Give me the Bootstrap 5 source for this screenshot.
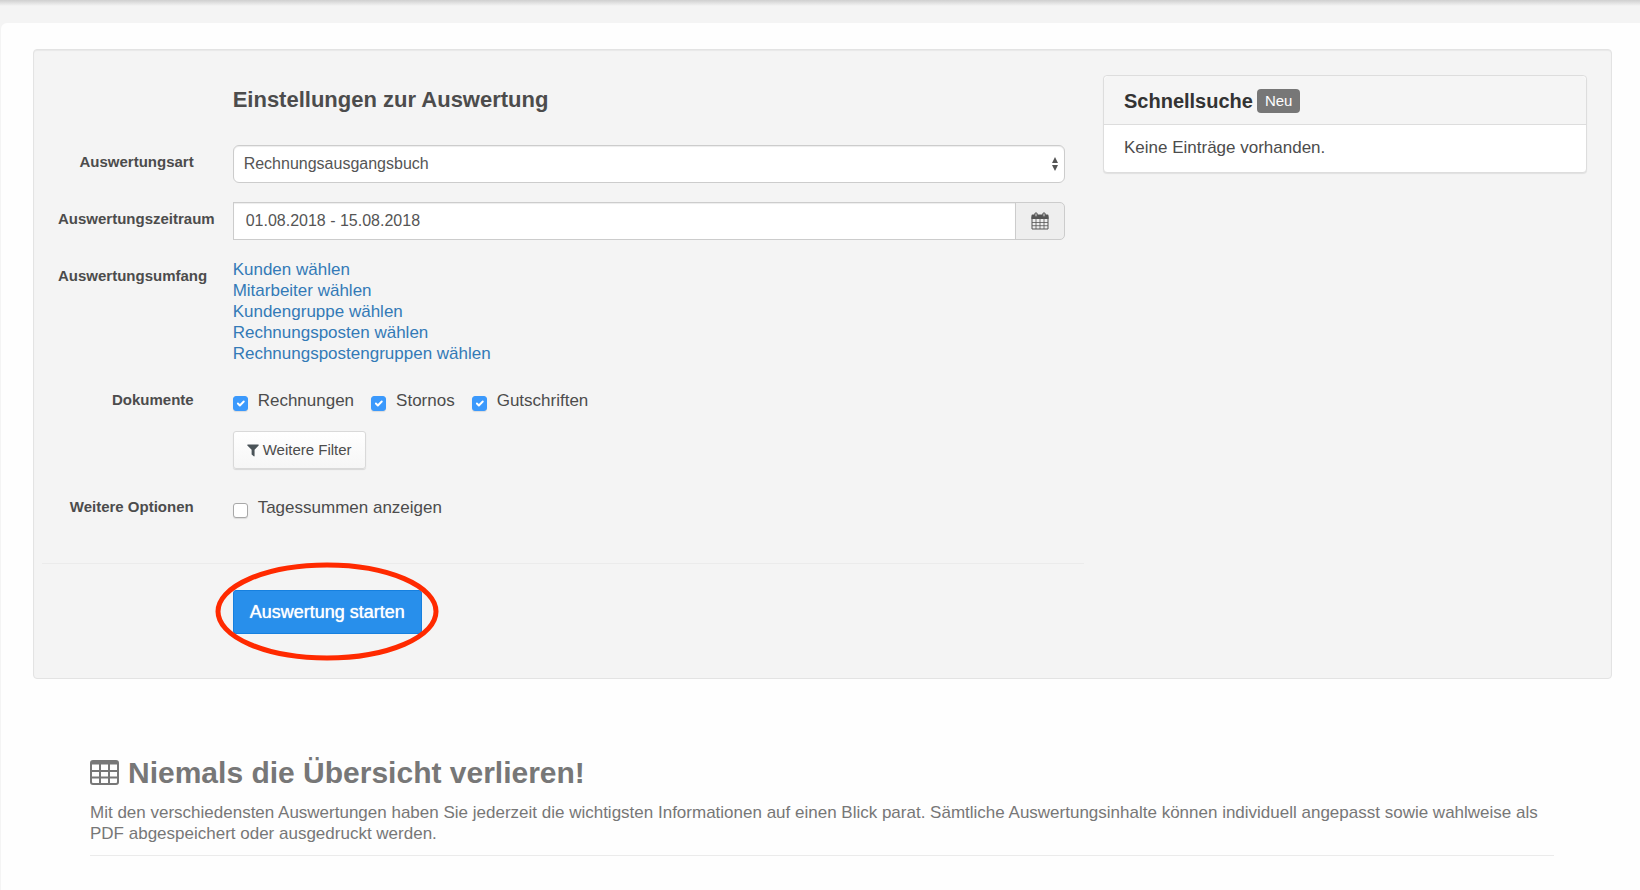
<!DOCTYPE html>
<html lang="de">
<head>
<meta charset="utf-8">
<meta name="viewport" content="width=device-width, initial-scale=1">
<title>Auswertung</title>
<link href="https://cdn.jsdelivr.net/npm/bootstrap@5.3.0/dist/css/bootstrap.min.css" rel="stylesheet">
<style>
body { background: #f4f4f4; color: #4c4c4c; font-family: "Liberation Sans", Arial, sans-serif; font-size: 17px; line-height: 21px; }
.topbar-edge { height: 23px; background: linear-gradient(#cfcfcf, #f4f4f4 6px); }
.sheet { background: #fefefe; border-radius: 6px 0 0 0; margin-left: 1px; padding: 26px 28px 0 32px; min-height: calc(100vh - 23px); }
.well { background: #f4f4f4; border: 1px solid #e3e3e3; border-radius: 4px; box-shadow: inset 0 1px 1px rgba(0,0,0,.05); padding: 25px 24px 44px 25px; }
.outer-row { --bs-gutter-x: 38px; }
.form-line { --bs-gutter-x: 36px; margin-bottom: 19px; }
.form-line.filters { margin-bottom: 21px; }
.form-title { font-size: 22px; line-height: 50px; margin-bottom: 20px; font-weight: 700; }
.line-label { font-size: 15px; font-weight: 700; line-height: 20px; padding: 7px 21px 0 17px; white-space: nowrap; }
.line-label > * { margin: 0; font: inherit; }
.field { font-size: 16px; height: 38px; color: #555; border: 1px solid #ccc; border-radius: 5px; box-shadow: inset 0 1px 1px rgba(0,0,0,.075); }
select.field { padding: 0 30px 0 10px; border-radius: 6px; background: #fff url("data:image/svg+xml,%3Csvg xmlns='http://www.w3.org/2000/svg' viewBox='0 0 8 14'%3E%3Cpath fill='%23555' d='M4 0l3 6H1zM4 14l3-6H1z'/%3E%3C/svg%3E") no-repeat right 5px center / 8px 14px; }
input.field { padding: 0 12px; border-radius: 0; }
.cal-addon { width: 50px; padding: 0; justify-content: center; background: #eee; border-color: #ccc; color: #555; border-radius: 0 5px 5px 0; }
.pick { color: #337ab7; text-decoration: none; }
.options { padding-top: 7px; gap: 17px; }
.tick { display: flex; gap: 10px; }
.tick .form-check-input { width: 15px; height: 15px; margin: 6px 0 0; border: 1px solid #a8a8a8; border-radius: 3px; box-shadow: 0 1px 1px rgba(0,0,0,.1); }
.tick .form-check-input:checked { background-color: #3b99fc; border-color: #3b99fc; }
.btn-filter { margin-top: 20px; height: 38px; padding: 0 13px; font-size: 15px; color: #4c4c4c; background: linear-gradient(#fff, #f6f6f6); border: 1px solid #d9d9d9; border-radius: 3px; box-shadow: 0 1px 1px rgba(0,0,0,.12); }
.rule { margin: 0; border-top: 1px solid #ebebeb; opacity: 1; }
.form-rule { margin: 45px 1px 26px; }
.btn-start { height: 44px; padding: 0 16px; font-size: 18px; color: #fff; background: #288feb; border: 1px solid #1680df; border-radius: 3px; text-shadow: 0 0 1px #fff; }
.marker { left: -18px; top: -28px; width: 224px; height: 99px; pointer-events: none; }
.quick { border: 1px solid #ddd; border-radius: 4px; box-shadow: 0 1px 1px rgba(0,0,0,.08); }
.quick .card-header { background: #f5f5f5; border-color: #ddd; padding: 2px 20px 0; height: 49px; color: #333; gap: 4px; }
.quick h2 { font-size: 20px; font-weight: 700; margin: 0; }
.quick .card-body { padding: 12px 20px 14px; }
.tag-new { background: #777; color: #fff; font-size: 15px; line-height: 24px; padding: 0 8px; border-radius: 4px; }
.promo { padding: 74px 58px 0 57px; color: #777; }
.promo h1 { font-size: 30px; line-height: 40px; font-weight: 700; margin: 0 0 9px; gap: 9px; }
.promo h1 svg { margin-bottom: 2px; }
.promo p { margin: 0 0 11px; }
</style>
</head>
<body>
<div class="topbar-edge"></div>
<main class="sheet">
  <div class="well">
    <div class="row outer-row">
      <form class="col-8">
        <div class="row form-line mb-0">
          <h2 class="col-10 offset-2 form-title">Einstellungen zur Auswertung</h2>
        </div>
        <div class="row form-line">
          <div class="col-2 line-label text-end"><label for="kind">Auswertungsart</label></div>
          <div class="col-10">
            <select id="kind" class="form-select field"><option>Rechnungsausgangsbuch</option></select>
          </div>
        </div>
        <div class="row form-line">
          <div class="col-2 line-label"><label for="period">Auswertungszeitraum</label></div>
          <div class="col-10">
            <div class="input-group flex-nowrap">
              <input id="period" type="text" class="form-control field" value="01.08.2018 - 15.08.2018">
              <span class="input-group-text cal-addon">
                <svg width="18" height="18" viewBox="0 0 18 18" aria-hidden="true"><path fill="none" stroke="currentColor" d="M1 4.500h16v12.500H1z"/><path fill="none" stroke="currentColor" stroke-width=".8" d="M5 7v10M9 7v10M13 7v10M1 10.500h16M1 13.700h16"/><path fill="currentColor" d="M1.500 2.500h15a1 1 0 0 1 1 1V7H.5V3.500a1 1 0 0 1 1-1z"/><path fill="#bbb" stroke="currentColor" d="M3.800 1.500q1.200-1.500 2.400 0v3q-1.200 1-2.400 0zM11.800 1.500q1.200-1.500 2.400 0v3q-1.200 1-2.400 0z"/></svg>
              </span>
            </div>
          </div>
        </div>
        <div class="row form-line">
          <div class="col-2 line-label">Auswertungsumfang</div>
          <div class="col-10 d-flex flex-column align-items-start">
            <a class="pick" href="#">Kunden wählen</a>
            <a class="pick" href="#">Mitarbeiter wählen</a>
            <a class="pick" href="#">Kundengruppe wählen</a>
            <a class="pick" href="#">Rechnungsposten wählen</a>
            <a class="pick" href="#">Rechnungspostengruppen wählen</a>
          </div>
        </div>
        <div class="row form-line filters">
          <div class="col-2 line-label text-end">Dokumente</div>
          <div class="col-10">
            <div class="d-flex options">
              <label class="tick"><input class="form-check-input" type="checkbox" checked>Rechnungen</label>
              <label class="tick"><input class="form-check-input" type="checkbox" checked>Stornos</label>
              <label class="tick"><input class="form-check-input" type="checkbox" checked>Gutschriften</label>
            </div>
            <button type="button" class="btn btn-filter d-flex align-items-center gap-1">
              <svg width="12" height="13" viewBox="0 0 13 13" aria-hidden="true"><path fill="#4a5358" d="M.8 0h11.400q.9.300.4 1.100L8.200 5.600V12.400q-.2.700-.9.400L5 10.800V5.600L.4 1.100Q0 .3.800 0z"/></svg>
              Weitere Filter
            </button>
          </div>
        </div>
        <div class="row form-line mb-0">
          <div class="col-2 line-label text-end">Weitere Optionen</div>
          <div class="col-10">
            <div class="d-flex options">
              <label class="tick"><input class="form-check-input" type="checkbox">Tagessummen anzeigen</label>
            </div>
          </div>
        </div>
        <div class="row form-line mb-0"><hr class="rule form-rule p-0"></div>
        <div class="row form-line mb-0">
          <div class="col-10 offset-2">
            <div class="position-relative d-inline-flex">
              <button type="button" class="btn btn-start">Auswertung starten</button>
              <svg class="marker position-absolute" viewBox="0 0 224 99" aria-hidden="true"><ellipse cx="112" cy="49.500" rx="109" ry="46.500" fill="none" stroke="#ff2a00" stroke-width="5"/></svg>
            </div>
          </div>
        </div>
      </form>
      <aside class="col-4">
        <div class="card quick">
          <div class="card-header d-flex align-items-center"><h2>Schnellsuche</h2><span class="tag-new">Neu</span></div>
          <div class="card-body">Keine Einträge vorhanden.</div>
        </div>
      </aside>
    </div>
  </div>
  <section class="promo">
    <h1 class="d-flex align-items-center">
      <svg width="29" height="25" viewBox="0 0 29 25" aria-hidden="true"><path fill="#777" fill-rule="evenodd" d="M3 0h23A3 3 0 0 1 29 3v19a3 3 0 0 1-3 3H3a3 3 0 0 1-3-3V3A3 3 0 0 1 3 0zM2 4.500V10h7V4.500zm9 0V10h7V4.500zm9 0V10h7V4.500zM2 12v4.500h7V12zm9 0v4.500h7V12zm9 0v4.500h7V12zM2 18.500V22q0 1 1 1h6v-4.500zm9 0V23h7v-4.500zm9 0V23h6q1 0 1-1v-3.500z"/></svg>
      <span>Niemals die Übersicht verlieren!</span>
    </h1>
    <p>Mit den verschiedensten Auswertungen haben Sie jederzeit die wichtigsten Informationen auf einen Blick parat. Sämtliche Auswertungsinhalte können individuell angepasst sowie wahlweise als PDF abgespeichert oder ausgedruckt werden.</p>
    <hr class="rule">
  </section>
</main>
<script src="https://cdn.jsdelivr.net/npm/bootstrap@5.3.0/dist/js/bootstrap.bundle.min.js"></script>
</body>
</html>
